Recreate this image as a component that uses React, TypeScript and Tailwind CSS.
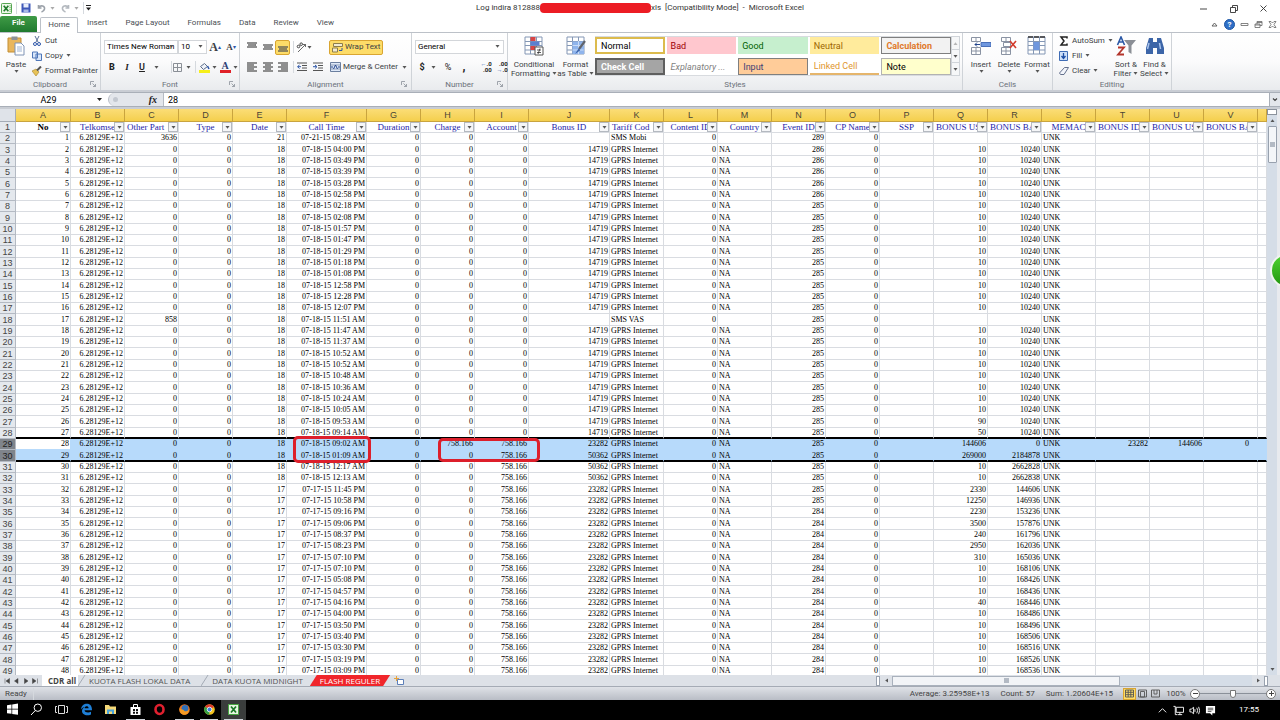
import React from "react";
import clsx from "clsx";

type Column = { id: string; width?: string; label?: string; left?: boolean; long?: boolean };

const COLUMNS: Column[] = [
  { id: "A", width: "w-[55px]", label: "No" },
  { id: "B", width: "w-[54px]", label: "Telkomse" },
  { id: "C", width: "w-[54px]", label: "Other Part", long: true },
  { id: "D", width: "w-[54px]", label: "Type" },
  { id: "E", width: "w-[54px]", label: "Date" },
  { id: "F", width: "w-[80px]", label: "Call Time" },
  { id: "G", width: "w-[54px]", label: "Duration" },
  { id: "H", width: "w-[54px]", label: "Charge" },
  { id: "I", width: "w-[54px]", label: "Account" },
  { id: "J", width: "w-[81px]", label: "Bonus ID" },
  { id: "K", width: "w-[54px]", label: "Tariff Cod", left: true, long: true },
  { id: "L", width: "w-[54px]", label: "Content ID" },
  { id: "M", width: "w-[54px]", label: "Country", left: true },
  { id: "N", width: "w-[54px]", label: "Event ID" },
  { id: "O", width: "w-[54px]", label: "CP Name" },
  { id: "P", width: "w-[54px]", label: "SSP" },
  { id: "Q", width: "w-[54px]", label: "BONUS US", long: true },
  { id: "R", width: "w-[54px]", label: "BONUS BA", long: true },
  { id: "S", width: "w-[54px]", label: "MEMAC", left: true },
  { id: "T", width: "w-[54px]", label: "BONUS ID", long: true },
  { id: "U", width: "w-[54px]", label: "BONUS US", long: true },
  { id: "V", width: "w-[54px]", label: "BONUS BA", long: true },
  { id: "" },
];

const CALL_TIMES = [
  "07-21-15 08:29 AM", "07-18-15 04:00 PM", "07-18-15 03:49 PM", "07-18-15 03:39 PM",
  "07-18-15 03:28 PM", "07-18-15 02:58 PM", "07-18-15 02:18 PM", "07-18-15 02:08 PM",
  "07-18-15 01:57 PM", "07-18-15 01:47 PM", "07-18-15 01:29 PM", "07-18-15 01:18 PM",
  "07-18-15 01:08 PM", "07-18-15 12:58 PM", "07-18-15 12:28 PM", "07-18-15 12:07 PM",
  "07-18-15 11:51 AM", "07-18-15 11:47 AM", "07-18-15 11:37 AM", "07-18-15 10:52 AM",
  "07-18-15 10:52 AM", "07-18-15 10:48 AM", "07-18-15 10:36 AM", "07-18-15 10:24 AM",
  "07-18-15 10:05 AM", "07-18-15 09:53 AM", "07-18-15 09:14 AM", "07-18-15 09:02 AM",
  "07-18-15 01:09 AM", "07-18-15 12:17 AM", "07-18-15 12:13 AM", "07-17-15 11:45 PM",
  "07-17-15 10:58 PM", "07-17-15 09:16 PM", "07-17-15 09:06 PM", "07-17-15 08:37 PM",
  "07-17-15 08:23 PM", "07-17-15 07:10 PM", "07-17-15 07:10 PM", "07-17-15 05:08 PM",
  "07-17-15 04:57 PM", "07-17-15 04:16 PM", "07-17-15 04:00 PM", "07-17-15 03:50 PM",
  "07-17-15 03:40 PM", "07-17-15 03:30 PM", "07-17-15 03:19 PM", "07-17-15 03:09 PM",
];

// bonus used / bonus balance from record 26 on, earlier ones are 10 / 10240
const BONUS: [number, number][] = [
  [90, 10240], [50, 10240], [144606, 0], [269000, 2184878], [10, 2662828], [10, 2662838],
  [2330, 144606], [12250, 146936], [2230, 153236], [3500, 157876], [240, 161796],
  [2950, 162036], [310, 165036], [10, 168106], [10, 168426], [10, 168436], [40, 168446],
  [10, 168486], [10, 168496], [10, 168506], [10, 168516], [10, 168526], [10, 168536],
];

const buildRow = (no: number): Record<string, string | number> => {
  const sms = no === 1 || no === 17;
  const bonus = no >= 26 ? BONUS[no - 26] : [10, 10240];
  const row: Record<string, string | number> = {
    A: no,
    B: "6.28129E+12",
    C: no === 1 ? 3636 : no === 17 ? 858 : 0,
    D: 0,
    E: no === 1 ? 21 : no <= 31 ? 18 : 17,
    F: CALL_TIMES[no - 1],
    G: 0,
    H: no === 28 ? "758.166" : 0,
    I: no >= 28 ? "758.166" : 0,
    K: no === 1 ? "SMS Mobi" : no === 17 ? "SMS VAS" : "GPRS Internet",
    L: 0,
    N: no === 1 ? 289 : no <= 6 ? 286 : no <= 33 ? 285 : 284,
    O: 0,
    S: "UNK",
  };
  if (!sms) {
    row.J = no < 28 ? 14719 : no >= 29 && no <= 31 ? 50362 : 23282;
    row.M = "NA";
    row.Q = bonus[0];
    row.R = bonus[1];
  }
  if (no === 28) {
    row.T = 23282;
    row.U = 144606;
    row.V = 0;
  }
  return row;
};

const ROWS = CALL_TIMES.map((_, i) => buildRow(i + 1));

const Caret = ({ className = "" }: { className?: string }) => (
  <svg viewBox="0 0 5 3" className={clsx("w-[5px] h-[3px] shrink-0", className)} fill="#555">
    <path d="M0.5 0h4L2.5 2.8z" />
  </svg>
);

const Sep = () => <span className="w-px h-3 bg-[#d5d9de] shrink-0" />;

const ExcelIcon = ({ className }: { className?: string }) => (
  <svg viewBox="0 0 12 12" className={className}>
    <rect x="0.5" y="0.5" width="11" height="11" rx="1" fill="#eef8ea" stroke="#3f9a3c" />
    <path d="M3 3l5 6M8 3l-5 6" stroke="#1e7b2a" strokeWidth="1.8" />
    <path d="M9 3h2M9 5h2M9 7h2M9 9h2" stroke="#6cb862" strokeWidth="0.8" />
  </svg>
);

const IconButton = ({
  label,
  className = "w-4",
  children,
}: {
  label: string;
  className?: string;
  children: React.ReactNode;
}) => (
  <button
    aria-label={label}
    className={clsx("h-[13px] flex items-center justify-center shrink-0", className)}
  >
    {children}
  </button>
);

const Lines = ({ rows }: { rows: [number, number, number][] }) => (
  <svg viewBox="0 0 10 10" className="w-[10px] h-[10px]" stroke="#555" strokeWidth="1.3">
    {rows.map(([x1, x2, y]) => (
      <path key={y} d={`M${x1} ${y}H${x2}`} />
    ))}
  </svg>
);

const Group = ({
  title,
  width,
  launcher,
  children,
}: {
  title: string;
  width: string;
  launcher?: boolean;
  children: React.ReactNode;
}) => (
  <section className={clsx("flex flex-col shrink-0 border-r border-[#cfd3d8]", width)}>
    <div className="h-[46px] flex">{children}</div>
    <div className="h-[11px] flex items-center justify-center relative text-[#6b717a]">
      {title}
      {launcher && (
        <button aria-label={`${title} settings`} className="absolute right-1 top-0.5">
          <svg viewBox="0 0 6 6" className="size-1.5" stroke="#8a9099" fill="none">
            <path d="M0.5 4V0.5H4M2.5 2.5l3 3M5.5 3v2.5H3" strokeWidth="0.8" />
          </svg>
        </button>
      )}
    </div>
  </section>
);

const BigButton = ({
  lines,
  width,
  icon,
  inlineCaret,
}: {
  lines: string[];
  width: string;
  icon: React.ReactNode;
  inlineCaret?: boolean;
}) => (
  <button className={clsx("flex flex-col items-center pt-[3px] leading-[9px] shrink-0", width)}>
    <span className="h-5 flex items-center">{icon}</span>
    <span className="mt-1 whitespace-nowrap">{lines[0]}</span>
    <span className="flex items-center gap-0.5 h-[9px] whitespace-nowrap">
      {lines[1]}
      <Caret className={inlineCaret ? "" : "mb-1"} />
    </span>
  </button>
);

const SmallButton = ({
  label,
  caret,
  icon,
}: {
  label: string;
  caret?: boolean;
  icon: React.ReactNode;
}) => (
  <button className="h-[15px] flex items-center gap-[3px] whitespace-nowrap">
    <svg viewBox="0 0 10 10" className="size-[10px] shrink-0">
      {icon}
    </svg>
    {label}
    {caret && <Caret />}
  </button>
);

const Picker = ({ label, value, width }: { label: string; value: string; width: string }) => (
  <div className={clsx("relative h-[14px] shrink-0", width)}>
    <select
      aria-label={label}
      className="appearance-none w-full h-full border border-[#d3d6da] bg-white pl-0.5 text-[8px] leading-[10px] text-black"
    >
      <option>{value}</option>
    </select>
    <Caret className="absolute right-1 top-[5px] pointer-events-none" />
  </div>
);

const TitleBar = () => (
  <header className="h-4 grid grid-cols-[1fr_auto_1fr] items-center">
    <div className="flex items-center pl-px gap-1">
      <ExcelIcon className="size-[11px]" />
      <Sep />
      <button aria-label="Save">
        <svg viewBox="0 0 10 10" className="size-[10px]">
          <path d="M0.5 0.5h9v9h-9z" fill="#3d57b8" />
          <path d="M2.5 0.5h5v4h-5z" fill="#e8eefb" />
          <path d="M2.5 6.5h5v3h-5z" fill="#a9b9e6" />
        </svg>
      </button>
      <button aria-label="Undo" className="flex items-center gap-1 ml-0.5">
        <svg viewBox="0 0 9 9" className="size-[9px]" fill="none" stroke="#9ba1a9" strokeWidth="1.6">
          <path d="M1.5 1v3h3M1.5 3.5C4 0.5 8 2 7.5 5C7.2 6.5 6 7.5 4.5 8" />
        </svg>
        <Caret className="opacity-50" />
      </button>
      <button aria-label="Redo" className="flex items-center gap-1 ml-0.5">
        <svg viewBox="0 0 9 9" className="size-[9px]" fill="none" stroke="#b3b8be" strokeWidth="1.6">
          <path d="M7.5 1v3h-3M7.5 3.5C5 0.5 1 2 1.5 5C1.8 6.5 3 7.5 4.5 8" />
        </svg>
        <Caret className="opacity-50" />
      </button>
      <Sep />
      <button aria-label="Customize Quick Access Toolbar" className="-ml-0.5">
        <svg viewBox="0 0 5 6" className="w-[5px] h-1.5" fill="#222">
          <path d="M0 0h5v1H0zM0 2.5h5L2.5 5.5z" />
        </svg>
      </button>
    </div>
    <h1 className="flex items-center whitespace-pre text-[#333]">
      Log indira 812888
      <span className="w-[111px] h-[10px] rounded-[4px] bg-[#ec1c24]" />
      {"xls  [Compatibility Mode]  -  Microsoft Excel"}
    </h1>
    <div className="flex justify-end pr-0.5">
      {[
        ["Minimize", "M1 5h7"],
        ["Restore", "M1.5 3.5h5v5h-5zM3.5 3.5v-2h5v5h-2"],
        ["Close", "M1.5 1.5l6 6M7.5 1.5l-6 6"],
      ].map(([name, d]) => (
        <button key={name} aria-label={name} className="w-[30px] h-4 flex items-center justify-center">
          <svg viewBox="0 0 9 9" className="size-[9px]" fill="none" stroke="#333" strokeWidth="0.9">
            <path d={d} />
          </svg>
        </button>
      ))}
    </div>
  </header>
);

const RibbonTabs = () => (
  <nav className="h-[17px] flex items-end border-b border-[#bcc1c8] text-[#4b4f55]">
    <button className="w-[37px] h-4 pb-0.5 rounded-t-[2px] bg-linear-to-b from-[#3f9b46] to-[#1f7a2e] text-white font-semibold">
      File
    </button>
    <button className="ml-[3px] w-[38px] h-4 pb-0.5 -mb-px bg-white border border-b-0 border-[#bcc1c8] rounded-t-[2px]">
      Home
    </button>
    {["Insert", "Page Layout", "Formulas", "Data", "Review", "View"].map((tab) => (
      <button key={tab} className="px-[9px] h-4 pb-0.5">
        {tab}
      </button>
    ))}
    <div className="ml-auto flex h-4 items-center gap-[5px] pr-[3px]">
      <button aria-label="Minimize the ribbon">
        <svg viewBox="0 0 9 9" className="size-[9px]" fill="none" stroke="#555">
          <path d="M2 6l2.5-3L7 6z" strokeWidth="0.9" />
        </svg>
      </button>
      <button
        aria-label="Help"
        className="size-[11px] rounded-full bg-[#2f6fc6] border border-[#1d56a5] text-white text-[8px] leading-[9px] font-bold"
      >
        ?
      </button>
      {[
        ["Minimize workbook", "M1 3.5h7v2h-7z"],
        ["Restore workbook", "M1 4h5v3.500h-5zM3 4v-2.500h5v4h-2M1 5h5M3 2.500h5"],
        ["Close workbook", "M1 1.500h2l1.500 1.500l1.500-1.500h2L6 4.500l2 3H6L4.500 6L3 7.500H1L3 4.500z"],
      ].map(([name, d]) => (
        <button key={name} aria-label={name}>
          <svg viewBox="0 0 9 9" className="size-[9px]" fill="none" stroke="#666" strokeWidth="0.8">
            <path d={d} />
          </svg>
        </button>
      ))}
    </div>
  </nav>
);

const CellStyle = ({ name, className }: { name: string; className: string }) => (
  <button className={clsx("h-[17px] px-1 flex items-center text-[9px] whitespace-nowrap overflow-hidden", className)}>
    {name}
  </button>
);

const SheetGrid = ({ mark }: { mark?: React.ReactNode }) => (
  <svg viewBox="0 0 20 20" className="size-5">
    <path d="M1 1h17v17h-17z" fill="#fff" />
    <path d="M1 1h17v17h-17zM1 5.500h17M1 9.500h17M1 14h17M6.500 1v17M12.500 1v17" fill="none" stroke="#8497b5" />
    {mark}
  </svg>
);

const Ribbon = () => (
  <div className="h-[57px] flex bg-linear-to-b from-white via-[#fbfbfc] to-[#e9ebee] text-[#3b3f45]">
    <Group title="Clipboard" width="w-[101px]" launcher>
      <BigButton
        width="w-8"
        lines={["Paste", ""]}
        icon={
          <svg viewBox="0 0 20 20" className="size-5">
            <path d="M2 2h13v14h-13z" fill="#e9b65c" stroke="#c28d33" />
            <path d="M5.500 0.500h6v3.500h-6z" fill="#8d9199" />
            <path d="M9 7h6l3 3v9h-9z" fill="#fff" stroke="#7e93b5" />
            <path d="M11 11h5M11 13h5M11 15h5" stroke="#9fb4d3" />
          </svg>
        }
      />
      <div className="flex flex-col">
        <SmallButton
          label="Cut"
          icon={
            <>
              <path d="M3 0l3 6M7 0L4 6" stroke="#5a6f94" />
              <circle cx="3" cy="8" r="1.500" fill="none" stroke="#2c55a8" />
              <circle cx="7" cy="8" r="1.500" fill="none" stroke="#2c55a8" />
            </>
          }
        />
        <SmallButton
          label="Copy"
          caret
          icon={<path d="M0.500 1h5v6h-5zM4 3h5.500v6.500h-5.500z" fill="#d9e6fa" stroke="#4f77b8" />}
        />
        <SmallButton
          label="Format Painter"
          icon={
            <>
              <path d="M0 5l4-2 3 3-3 4z" fill="#e7c257" stroke="#a8842a" strokeWidth="0.6" />
              <path d="M5 4.500L9 0.500" stroke="#555" strokeWidth="2" />
            </>
          }
        />
      </div>
    </Group>

    <Group title="Font" width="w-[139px]" launcher>
      <div className="flex flex-col pt-[7px] gap-[6px] pl-[3px]">
        <div className="flex items-center h-[14px]">
          <Picker label="Font" value="Times New Roman" width="w-[74px]" />
          <Picker label="Font size" value="10" width="w-[29px]" />
          <IconButton label="Increase font size">
            <span className="font-['Liberation_Serif',serif] font-bold text-[12px] leading-3">A</span>
            <span className="text-[6px] text-[#2c55a8]">▴</span>
          </IconButton>
          <IconButton label="Decrease font size">
            <span className="font-['Liberation_Serif',serif] font-bold text-[9px] leading-3">A</span>
            <span className="text-[6px] text-[#2c55a8]">▾</span>
          </IconButton>
        </div>
        <div className="flex items-center h-[14px] text-[#222] text-[9px]">
          <IconButton label="Bold"><b className="font-extrabold">B</b></IconButton>
          <IconButton label="Italic" className="w-[14px]"><i className="font-['Liberation_Serif',serif] font-bold">I</i></IconButton>
          <IconButton label="Underline"><u className="font-semibold">U</u></IconButton>
          <Caret className="mx-1" />
          <span className="w-2" />
          <Sep />
          <IconButton label="Borders" className="w-[10px]">
            <svg viewBox="0 0 9 9" className="size-[9px]" fill="none" stroke="#8a8f96">
              <path d="M0.500 0.500h8v8h-8zM4.500 0.500v8M0.500 4.500h8" />
            </svg>
          </IconButton>
          <Caret className="mx-1" />
          <Sep />
          <IconButton label="Fill color">
            <svg viewBox="0 0 11 11" className="size-[11px]">
              <path d="M1.500 4.500l4-3 3 3-4 3z" fill="#eef2f8" stroke="#5b6c89" />
              <path d="M8.500 4l1.500 3" stroke="#2c55a8" strokeWidth="1.500" />
              <path d="M0 8h11v3h-11z" fill="#f6ef1a" />
            </svg>
          </IconButton>
          <Caret />
          <IconButton label="Font color">
            <span className="flex flex-col items-center font-bold font-['Liberation_Serif',serif] text-[10px] leading-2 text-[#2d3f75] border-b-[3px] border-[#e02128] w-[11px]">
              A
            </span>
          </IconButton>
          <Caret />
        </div>
      </div>
    </Group>

    <Group title="Alignment" width="w-[172px]" launcher>
      <div className="flex flex-col pt-[7px] gap-[6px] pl-1">
        <div className="flex items-center h-[14px]">
          <IconButton label="Top align"><Lines rows={[[0, 10, 1], [1, 9, 3], [0, 10, 5]]} /></IconButton>
          <IconButton label="Middle align" className="w-[15px]"><Lines rows={[[0, 10, 3], [1, 9, 5], [0, 10, 7]]} /></IconButton>
          <button
            aria-label="Bottom align"
            className="w-[15px] h-[15px] flex items-center justify-center border border-[#d9a531] rounded-[2px] bg-[#fddc68]"
          >
            <Lines rows={[[0, 10, 5], [1, 9, 7], [0, 10, 9]]} />
          </button>
          <span className="w-[3px]" />
          <Sep />
          <IconButton label="Orientation" className="w-5">
            <svg viewBox="0 0 11 11" className="size-[11px]" fill="none" stroke="#444">
              <path d="M2 10L9.500 2.500M9.500 2.500H7M9.500 2.500V5" strokeWidth="0.8" />
              <circle cx="2.500" cy="4.500" r="1.300" />
              <circle cx="5.200" cy="2.200" r="1.300" />
            </svg>
            <Caret />
          </IconButton>
          <span className="ml-3 mr-[3px]"><Sep /></span>
          <button className="h-[15px] px-0.5 flex items-center gap-0.5 border border-[#d9a531] rounded-[2px] bg-[#fddc68] whitespace-nowrap">
            <svg viewBox="0 0 11 11" className="size-[11px]">
              <path d="M1.500 1.500h9v3h-9zM0.500 6h5v4h-5z" fill="#f1ead0" stroke="#8d7d4a" />
              <path d="M10 6v2.500H7" fill="none" stroke="#2c55a8" />
            </svg>
            Wrap Text
          </button>
        </div>
        <div className="flex items-center h-[14px]">
          <IconButton label="Align left"><Lines rows={[[0, 10, 1], [0, 7, 3], [0, 10, 5], [0, 7, 7], [0, 10, 9]]} /></IconButton>
          <IconButton label="Center" className="w-[15px]"><Lines rows={[[0, 10, 1], [2, 8, 3], [0, 10, 5], [2, 8, 7], [0, 10, 9]]} /></IconButton>
          <IconButton label="Align right" className="w-[15px]"><Lines rows={[[0, 10, 1], [3, 10, 3], [0, 10, 5], [3, 10, 7], [0, 10, 9]]} /></IconButton>
          <span className="w-[3px]" />
          <Sep />
          {["Decrease indent", "Increase indent"].map((name, i) => (
            <IconButton key={name} label={name}>
              <svg viewBox="0 0 10 10" className="size-[10px]" fill="none" stroke="#555">
                <path d="M0 1h10M5 3.500h5M5 6h5M0 8.500h10" />
                <path d={i ? "M0 4.700h3M2 3l2 1.700L2 6.500" : "M4 4.700H1M2.500 3l-2 1.700l2 1.800"} stroke="#2c55a8" />
              </svg>
            </IconButton>
          ))}
          <span className="mr-1"><Sep /></span>
          <button className="flex items-center gap-0.5 whitespace-nowrap">
            <svg viewBox="0 0 11 10" className="w-[11px] h-[10px]">
              <path d="M0.500 0.500h10v9h-10z" fill="#dfe9f8" stroke="#6b7f9f" />
              <path d="M0 3h11M0 7h11" stroke="#6b7f9f" strokeWidth="0.700" />
              <path d="M3.500 7l2-4 2 4M1 5h2M8 5h2" fill="none" stroke="#22448c" />
            </svg>
            Merge &amp; Center
            <Caret className="ml-0.5" />
          </button>
        </div>
      </div>
    </Group>

    <Group title="Number" width="w-[96px]" launcher>
      <div className="flex flex-col pt-[7px] gap-[6px] pl-[3px]">
        <Picker label="Number format" value="General" width="w-[89px]" />
        <div className="flex items-center h-[14px] text-[#222] text-[9px]">
          <IconButton label="Accounting format" className="w-[14px]"><b>$</b></IconButton>
          <Caret className="mx-0.5" />
          <IconButton label="Percent style" className="w-5">%</IconButton>
          <IconButton label="Comma style" className="w-3"><b className="text-[12px] leading-[6px]">,</b></IconButton>
          <span className="mx-1"><Sep /></span>
          <IconButton label="Increase decimal">
            <span className="text-[6px] leading-[6px] font-bold text-right"><span className="text-[#2c55a8]">←</span>.0<br />.00</span>
          </IconButton>
          <IconButton label="Decrease decimal">
            <span className="text-[6px] leading-[6px] font-bold text-right">.00<br /><span className="text-[#2c55a8]">→</span>.0</span>
          </IconButton>
        </div>
      </div>
    </Group>

    <Group title="Styles" width="w-[455px]">
      <BigButton
        width="w-[52px]"
        lines={["Conditional", "Formatting"]}
        inlineCaret
        icon={
          <SheetGrid
            mark={
              <>
                <path d="M6.500 1h5v4h-5zM6.500 10h5v4h-5z" fill="#d84545" />
                <path d="M6.500 5.500h9v4h-9z" fill="#5b7fd0" />
                <path d="M11 11h8v8h-8z" fill="#fff" stroke="#555" />
                <path d="M13 14h4M13 16.500h4M16 12.500l-2 5.500" stroke="#333" strokeWidth="0.800" />
              </>
            }
          />
        }
      />
      <BigButton
        width="w-[31px]"
        lines={["Format", "as Table"]}
        inlineCaret
        icon={
          <SheetGrid
            mark={
              <>
                <path d="M6.500 5.500h11.500v12.500h-11.500z" fill="#8fb4ec" />
                <path d="M6.500 9.500h11M6.500 14h11M12.500 5v13" stroke="#c9dcf7" />
                <path d="M19 5l-6 8" stroke="#60646b" strokeWidth="2.200" />
                <path d="M13 12l-4 6 5-3.500z" fill="#3a62a8" />
              </>
            }
          />
        }
      />
      <div className="ml-1 mt-[3px] h-[40px] flex">
        <div className="w-[356px] h-[40px] grid grid-cols-5 gap-x-0.5 content-between border-y border-[#d8dbdf] bg-white text-black">
          <CellStyle name="Normal" className="border-2 border-[#dcbb4d]" />
          <CellStyle name="Bad" className="bg-[#ffc7ce] text-[#9c0006]" />
          <CellStyle name="Good" className="bg-[#c6efce] text-[#006100]" />
          <CellStyle name="Neutral" className="bg-[#ffeb9c] text-[#9c6500]" />
          <CellStyle name="Calculation" className="bg-[#f2f2f2] text-[#e0792a] font-bold border border-[#7f7f7f]" />
          <CellStyle name="Check Cell" className="bg-[#a5a5a5] text-white font-bold border-2 border-[#5f5f5f]" />
          <CellStyle name="Explanatory ..." className="text-[#7f7f7f] italic" />
          <CellStyle name="Input" className="bg-[#ffcc99] text-[#3f3f76] border border-[#7f7f7f]" />
          <CellStyle name="Linked Cell" className="text-[#e0962f] border-b-2 border-[#e5b56c]" />
          <CellStyle name="Note" className="bg-[#ffffcc] border border-[#b2b2b2]" />
        </div>
        <div className="w-[9px] flex flex-col border border-[#d0d4d9] bg-[#f6f7f8]">
          {["Previous styles", "Next styles", "More styles"].map((name, i) => (
            <button key={name} aria-label={name} className="flex-1 flex items-center justify-center border-b border-[#d0d4d9] last:border-b-0">
              <Caret className={i === 0 ? "rotate-180 opacity-40" : ""} />
            </button>
          ))}
        </div>
      </div>
    </Group>

    <Group title="Cells" width="w-[90px]">
      <div className="flex pl-1">
        <BigButton
          width="w-7"
          lines={["Insert", ""]}
          icon={
            <svg viewBox="0 0 20 20" className="size-5" fill="#fff" stroke="#8a93a3">
              <path d="M0.500 1.500h9v4h-9zM5 1.500v4M0.500 11.500h9v7h-9zM5 11.500v7M0.500 15h9" />
              <path d="M10 6.500h10v4h-10z" fill="#6f97de" stroke="#4a6fb8" />
              <path d="M9 8.500H4M6 6.500l-2 2 2 2" fill="none" stroke="#22448c" />
            </svg>
          }
        />
        <BigButton
          width="w-7"
          lines={["Delete", ""]}
          icon={
            <svg viewBox="0 0 20 20" className="size-5" fill="#fff" stroke="#8a93a3">
              <path d="M2.500 1.500h9v4h-9zM7 1.500v4M4.500 6.500h7v4h-7zM2.500 11.500h9v7h-9zM7 11.500v7M2.500 15h9" />
              <path d="M11 5l6 7M17 5l-6 7" stroke="#d23b2c" strokeWidth="1.600" />
            </svg>
          }
        />
        <BigButton
          width="w-7"
          lines={["Format", ""]}
          icon={
            <SheetGrid
              mark={
                <>
                  <path d="M6.500 6h6v8h-6z" fill="#6f97de" />
                  <path d="M1 1h17" stroke="#333" strokeWidth="1.500" strokeDasharray="5 1" />
                </>
              }
            />
          }
        />
      </div>
    </Group>

    <Group title="Editing" width="w-[119px]">
      <div className="flex flex-col pl-1.5 w-[58px]">
        <SmallButton label="AutoSum" caret icon={<path d="M8 2.500V1H2l3 4-3 4h6V7.500" fill="none" stroke="#222" strokeWidth="1.500" />} />
        <SmallButton
          label="Fill"
          caret
          icon={
            <>
              <path d="M0.500 0.500h8v9h-8z" fill="#cfe0f8" stroke="#3f6cb5" />
              <path d="M4.500 2v5M2.500 5l2 2.500 2-2.500" fill="none" stroke="#1e4fa5" strokeWidth="1.300" />
            </>
          }
        />
        <SmallButton label="Clear" caret icon={<path d="M0.500 7l5-5.500h4L5 8.500H1.500z" fill="#f3f5fb" stroke="#64708c" />} />
      </div>
      <BigButton
        width="w-[30px]"
        lines={["Sort &", "Filter"]}
        inlineCaret
        icon={
          <svg viewBox="0 0 20 20" className="size-5" fill="none">
            <path d="M1.500 9L5 1l3.500 8M3 6h4.500" stroke="#2b58a6" strokeWidth="1.600" />
            <path d="M2 11.500h6L2 18.500h6" stroke="#b3352c" strokeWidth="1.800" />
            <path d="M8 4h12l-4.500 5.500v8.500l-3-2v-6.500z" fill="#8b8f96" />
          </svg>
        }
      />
      <BigButton
        width="w-[27px]"
        lines={["Find &", "Select"]}
        inlineCaret
        icon={
          <svg viewBox="0 0 20 20" className="size-5" fill="#3c65a8">
            <path d="M4 2h4v4h4V2h4l3 10v6h-7v-6h-4v6H1v-6z" />
            <path d="M4 7l-1.500 6M14.500 7l1 6" stroke="#a9c3ec" strokeWidth="1.500" />
          </svg>
        }
      />
    </Group>
  </div>
);

const FormulaBar = () => (
  <div className="py-0.5 bg-[#c9cdd4]">
    <div className="h-[15px] flex bg-white border-y border-[#a9afb8]">
      <div className="w-[108px] flex items-center pr-1.5">
        <input aria-label="Name box" defaultValue="A29" className="w-full min-w-0 text-center text-[9px] text-black" />
        <svg viewBox="0 0 5 3" className="w-[5px] h-[3px] shrink-0" fill="#222">
          <path d="M0 0h5L2.500 3z" />
        </svg>
      </div>
      <div className="w-14 flex items-center justify-between rounded-l-full bg-[#e3e6eb] border border-y-0 border-[#b6bbc4] pl-1 pr-1.5">
        <span className="size-[5px] rounded-full bg-[#c3c8d0]" />
        <button aria-label="Insert function" className="font-['Liberation_Serif',serif] italic font-bold text-[10px] leading-3 text-[#222]">
          fx
        </button>
      </div>
      <input aria-label="Formula" defaultValue="28" className="flex-1 min-w-0 pl-1 text-[9px] text-black" />
      <button aria-label="Expand formula bar" className="w-[11px] flex items-center justify-center border-l border-[#a9afb8] bg-[#e3e6eb]">
        <svg viewBox="0 0 6 4" className="w-1.5 h-1" fill="none" stroke="#444" strokeWidth="1.200">
          <path d="M1 0.500l2 2 2-2" />
        </svg>
      </button>
    </div>
  </div>
);

const FilterHeader = ({ column, first }: { column: Column; first: boolean }) => (
  <div className="relative">
    <div
      className={clsx(
        "overflow-hidden whitespace-nowrap text-[9px] leading-[10px]",
        first ? "font-bold text-black" : "text-[#2424a8]",
        column.long ? "pl-0.5 text-left" : "text-center",
      )}
    >
      {column.label}
    </div>
    <button
      aria-label={`Filter ${column.label}`}
      className="absolute right-0 top-0 w-[10px] h-[10px] flex items-center justify-center border border-[#b4b9c0] bg-[#f5f6f8]"
    >
      <Caret />
    </button>
  </div>
);

const RowNumber = ({ n, selected }: { n: number; selected?: boolean }) => (
  <th
    className={clsx(
      "p-0 font-normal text-center text-[9px] leading-[10px] font-['Liberation_Sans',sans-serif] border-r border-b border-[#b4bac3]",
      selected ? "bg-[#7f848b] text-[#222]" : "bg-[#e4e8ed] text-[#444]",
    )}
  >
    {n}
  </th>
);

const Worksheet = () => (
  <table className="w-full table-fixed border-separate border-spacing-0 bg-white text-[8px] leading-[10px] text-black font-['Liberation_Serif',serif]">
    <colgroup>
      <col className="w-4" />
      {COLUMNS.map((c) => (
        <col key={c.id} className={c.width} />
      ))}
    </colgroup>
    <thead className="font-['Liberation_Sans',sans-serif] text-[9px] leading-[12px]">
      <tr className="h-[13px]">
        <th className="p-0 bg-[#dfe3e9] border-r border-b border-[#a5acb6]" aria-label="Select all" />
        {COLUMNS.map((c) => (
          <th
            key={c.id}
            className="p-0 font-normal text-[#4a4535] bg-linear-to-b from-[#fbdd76] to-[#f4cf4c] border-r border-b border-[#c9a43e]"
          >
            {c.id}
          </th>
        ))}
      </tr>
    </thead>
    <tbody>
      <tr className="h-[11px]">
        <RowNumber n={1} />
        {COLUMNS.map((c, i) => (
          <td key={c.id} className="p-0 border-r border-b border-[#d9dce1]">
            {c.label && <FilterHeader column={c} first={i === 0} />}
          </td>
        ))}
      </tr>
      {ROWS.map((row, i) => {
        const n = i + 2;
        const selected = n === 29 || n === 30;
        const thick = n === 28 || n === 30;
        return (
          <tr key={n} className={n % 3 === 0 ? "h-3" : "h-[11px]"}>
            <RowNumber n={n} selected={selected} />
            {COLUMNS.map((c) => (
              <td
                key={c.id}
                className={clsx(
                  "py-0 overflow-hidden whitespace-nowrap border-r",
                  c.left ? "text-left" : "text-right",
                  c.id === "V" ? "pr-2" : "px-px",
                  thick ? "border-b-2 border-b-black leading-[9px]" : "border-b",
                  !thick && (n === 29 ? "border-b-[#b7dafb]" : "border-b-[#d9dce1]"),
                  selected ? "border-r-[#b7dafb]" : "border-r-[#d9dce1]",
                  selected && !(n === 29 && c.id === "A") && "bg-[#b7dafb]",
                )}
              >
                {row[c.id]}
              </td>
            ))}
          </tr>
        );
      })}
    </tbody>
  </table>
);

const VerticalScroll = () => (
  <div className="w-[13px] shrink-0 flex flex-col items-center bg-[#d5dde7] border-r-[3px] border-[#e8eaee]">
    <div className="w-full h-1.5 border border-[#8b929c] bg-white" />
    <button aria-label="Scroll up" className="h-[11px] flex items-center">
      <Caret className="rotate-180" />
    </button>
    <div className="w-[9px] h-[37px] rounded-[1px] border border-[#98a1ae] bg-[#f4f6f9] flex items-center justify-center">
      <span className="size-[5px] bg-[#b3bac4]" />
    </div>
    <button aria-label="Scroll down" className="mt-auto h-[11px] flex items-center">
      <Caret />
    </button>
  </div>
);

const Slash = () => (
  <svg viewBox="0 0 8 11" className="w-2 h-[11px] shrink-0" stroke="#a4abb5" fill="none">
    <path d="M0 11L7 0" />
  </svg>
);

const SheetTabs = () => (
  <div className="h-[11px] shrink-0 flex items-stretch bg-[#dde1e7] leading-[11px] text-[#555]">
    <div className="w-[42px] flex items-center justify-evenly">
      {[
        ["First sheet", "M1 0.500v5M5.500 0.500L2 3l3.500 2.500z"],
        ["Previous sheet", "M5 0.500L1.500 3L5 5.500z"],
        ["Next sheet", "M1.500 0.500L5 3L1.500 5.500z"],
        ["Last sheet", "M0.500 0.500L4 3L0.500 5.500zM5.500 0.500v5"],
      ].map(([name, d]) => (
        <button key={name} aria-label={name}>
          <svg viewBox="0 0 6 6" className="size-1.5" fill="#444" stroke="#444" strokeWidth="0.500">
            <path d={d} />
          </svg>
        </button>
      ))}
    </div>
    <div className="flex font-['Open_Sans','Noto_Sans',sans-serif]">
      <button className="pl-1.5 pr-0.5 bg-white font-bold text-[#444]">CDR all</button>
      <Slash />
      <button className="px-[3px]">KUOTA FLASH LOKAL DATA</button>
      <span className="w-2" />
      <Slash />
      <button className="px-[3px]">DATA KUOTA MIDNIGHT</button>
      <span className="w-1" />
      <button className="px-2.5 bg-[#f0262b] text-white [clip-path:polygon(7px_0,100%_0,calc(100%-7px)_100%,0_100%)]">
        FLASH REGULER
      </button>
    </div>
    <button aria-label="Insert worksheet" className="ml-1 flex items-center">
      <svg viewBox="0 0 10 10" className="size-[10px]">
        <path d="M3.500 3.500h6v5h-6z" fill="#fff" stroke="#5c7fb8" />
        <path d="M2.500 0v5M0 2.500h5" stroke="#e8a33a" />
      </svg>
    </button>
    <div className="ml-auto w-[404px] flex items-center">
      <span className="w-1 h-[10px] border border-[#98a1ae] bg-white" />
      <button aria-label="Scroll left" className="w-3 flex justify-center">
        <Caret className="rotate-90" />
      </button>
      <div className="w-[228px] h-[10px] border border-[#a9b1bc] bg-[#f2f4f7] flex items-center justify-center">
        <span className="size-[5px] bg-[#b3bac4]" />
      </div>
      <div className="flex-1 h-full bg-[#d5dde7]" />
      <button aria-label="Scroll right" className="w-3 flex justify-center">
        <Caret className="-rotate-90" />
      </button>
      <span className="w-1 h-[10px] border border-[#98a1ae] bg-white" />
      <span className="w-3" />
    </div>
  </div>
);

const StatusBar = () => (
  <div className="h-[14px] shrink-0 flex items-center bg-linear-to-b from-[#dfe2e7] to-[#b9bdc6] border-t border-[#a5abb5] text-[#444] whitespace-nowrap">
    <span className="pl-[5px] pr-1.5">Ready</span>
    <Sep />
    <div className="ml-auto flex items-center gap-[11px]">
      <span>Average: 3.25958E+13</span>
      <span>Count: 57</span>
      <span>Sum: 1.20604E+15</span>
    </div>
    <div className="ml-[10px] flex items-center">
      {[
        ["Normal view", "M0.500 1h8v7h-8zM0.500 3.300h8M0.500 5.700h8M3.200 1v7M5.800 1v7"],
        ["Page layout", "M0.500 1h8v7h-8zM2.500 2.500h4v5.500h-4z"],
        ["Page break preview", "M0.500 1h8v7h-8zM3 1v4h3V1"],
      ].map(([name, d], i) => (
        <button
          key={name}
          aria-label={name}
          className={clsx(
            "w-[13px] h-3 flex items-center justify-center",
            i === 0 && "border border-[#d9a531] bg-[#fddc68]",
          )}
        >
          <svg viewBox="0 0 9 9" className="size-[9px]" fill="none" stroke="#555" strokeWidth="0.900">
            <path d={d} />
          </svg>
        </button>
      ))}
    </div>
    <span className="w-7 text-center">100%</span>
    <button aria-label="Zoom out" className="size-[10px] rounded-full border border-[#777] bg-white flex items-center justify-center">
      <span className="w-[5px] h-px bg-[#444]" />
    </button>
    <input
      type="range"
      aria-label="Zoom"
      defaultValue={50}
      className="w-[66px] h-[10px] appearance-none bg-[linear-gradient(#8a9099,#8a9099)] bg-[length:100%_1px] bg-center bg-no-repeat [&::-webkit-slider-thumb]:appearance-none [&::-webkit-slider-thumb]:w-[6px] [&::-webkit-slider-thumb]:h-2 [&::-webkit-slider-thumb]:rounded-b-[3px] [&::-webkit-slider-thumb]:border [&::-webkit-slider-thumb]:border-[#777] [&::-webkit-slider-thumb]:bg-white"
    />
    <button aria-label="Zoom in" className="size-[10px] mr-1 rounded-full border border-[#777] bg-white flex items-center justify-center">
      <svg viewBox="0 0 5 5" className="size-[5px]" stroke="#444">
        <path d="M0 2.500h5M2.500 0v5" />
      </svg>
    </button>
  </div>
);

const TASKS: { name: string; open?: boolean; active?: boolean; icon: React.ReactNode }[] = [
  { name: "Start", icon: <path d="M1 2.200l4.500-0.700v4.300H1zM6.200 1.400L12 0.500v5.300H6.200zM1 6.500h4.500v4.300L1 10.200zM6.200 6.500H12v5.300l-5.800-0.900z" fill="#fff" /> },
  { name: "Search", icon: <path d="M5 7.800L1 12M7.800 1a3.700 3.700 0 1 1 0 7.400a3.700 3.700 0 1 1 0-7.400" fill="none" stroke="#fff" /> },
  { name: "Task view", icon: <path d="M3.500 2.500h6v8h-6zM2 3.500H0.500v6H2M11 3.500h1.500v6H11" fill="none" stroke="#ddd" /> },
  { name: "Edge", icon: <path d="M1 6.500C1.500 2.500 4 0.800 6.800 0.800C10.500 0.800 12 3.500 12 7.200H4.500C4.800 9.300 8 10.200 11 8.800V11.400C6.500 13.500 2 11.500 2 8C2 6 3.200 4.700 4.800 4C3.300 4.200 2 5 1 6.500zM4.700 5.200H8.600C8.500 2.700 4.900 2.700 4.700 5.200z" fill="#1e7fd6" fillRule="evenodd" /> },
  {
    name: "File Explorer",
    icon: (
      <>
        <path d="M1 2h4l1 1.500h6V11H1z" fill="#f5d978" />
        <path d="M3 6.500h7V11H3z" fill="#4aa3dc" />
        <path d="M5 8.500h3V11H5z" fill="#f5d978" />
      </>
    ),
  },
  {
    name: "Store",
    open: true,
    icon: (
      <>
        <path d="M1.500 4h10v8h-10z" fill="#fff" />
        <path d="M4.500 4V1.500h4V4" fill="none" stroke="#fff" />
        <path d="M4 6h2v2H4zM7 6h2v2H7zM4 8.700h2v2H4zM7 8.700h2v2H7z" fill="#111" />
      </>
    ),
  },
  { name: "Opera", icon: <ellipse cx="6.500" cy="6.500" rx="4" ry="4.500" fill="none" stroke="#e0202f" strokeWidth="2.600" /> },
  {
    name: "Firefox",
    open: true,
    icon: (
      <>
        <circle cx="6.500" cy="6.500" r="5.300" fill="#e8701c" />
        <circle cx="7" cy="5.500" r="3.400" fill="#2f6fb8" />
        <path d="M1.500 5C3 7 5 6 6 7.500C7 9 10 8.500 11 6C11 10 8.500 11.800 6.500 11.800C3.500 11.800 1 9 1.500 5z" fill="#f49b24" />
      </>
    ),
  },
  {
    name: "Chrome",
    open: true,
    icon: (
      <>
        <circle cx="6.500" cy="6.500" r="5.300" fill="#f3c320" />
        <path d="M1.900 3.800A5.300 5.300 0 0 1 11.100 3.900L6.500 6.500z" fill="#dd3b2c" />
        <path d="M1.900 3.800A5.300 5.300 0 0 0 6.300 11.800L6.500 6.500z" fill="#34a047" />
        <circle cx="6.500" cy="6.500" r="2.300" fill="#3f7fe0" stroke="#fff" strokeWidth="0.800" />
      </>
    ),
  },
  {
    name: "Excel",
    open: true,
    active: true,
    icon: (
      <>
        <path d="M1.500 1.500h10v10h-10z" fill="#e9f7e4" stroke="#49a844" />
        <path d="M4 3.500l5 6M9 3.500l-5 6" stroke="#1e7b2a" strokeWidth="1.800" />
      </>
    ),
  },
];

const Taskbar = () => (
  <footer className="h-5 shrink-0 flex bg-black">
    <div className="w-[246px] flex">
      {TASKS.map((task) => (
        <button
          key={task.name}
          aria-label={task.name}
          className={clsx("flex-1 flex items-center justify-center px-[3px]", task.active && "bg-[#3a3d3c]")}
        >
          <span className={clsx("w-full h-full flex items-center justify-center border-b", task.open ? "border-[#cfd4da]" : "border-transparent")}>
            <svg viewBox="0 0 13 13" className="size-[13px] shrink-0">
              {task.icon}
            </svg>
          </span>
        </button>
      ))}
    </div>
    <div className="ml-auto flex items-center gap-[5px] pr-[21px] text-white">
      {[
        ["Show hidden icons", "M2 8l4-4 4 4"],
        ["Network", "M3.500 2.500h8v5.500h-8zM7.500 8v2.500M5 10.500h5M0.500 1.500h2v9h2"],
        ["Volume", "M1 4.500h1.500L5 2.500v7L2.500 7.500H1zM6.500 4.500v3M8.500 3q1.800 3 0 6M10.500 2q2.200 4 0 8"],
      ].map(([name, d]) => (
        <button key={name} aria-label={name}>
          <svg viewBox="0 0 12 12" className="size-[11px]" fill="none" stroke="#fff" strokeWidth="1">
            <path d={d} />
          </svg>
        </button>
      ))}
      <button aria-label="Notifications">
        <svg viewBox="0 0 12 12" className="size-[11px]">
          <path d="M1 1h10v8H8v2.500L5.500 9H1z" fill="#fff" />
          <path d="M3 3.500h6M3 5.200h6M3 7h4" stroke="#222" strokeWidth="0.800" />
        </svg>
      </button>
      <time className="ml-[18px] text-[8px]">17:55</time>
    </div>
  </footer>
);

const App: React.FC = () => {
  return (
    <div className="h-screen flex flex-col overflow-hidden bg-white text-[8px] leading-[10px] font-['Roboto','Open_Sans',sans-serif]">
      <TitleBar />
      <RibbonTabs />
      <Ribbon />
      <FormulaBar />
      <main className="relative flex-1 min-h-0 flex">
        <div className="flex-1 min-w-0 overflow-hidden">
          <Worksheet />
        </div>
        <VerticalScroll />
        {/* red pen marks over the call times and the charges */}
        <div className="absolute left-[293px] top-[327px] w-[78px] h-[27px] rounded-[5px] border-[3px] border-[#dd1f2b]" />
        <div className="absolute left-[438px] top-[329px] w-[102px] h-[24px] rounded-[5px] border-[3px] border-[#dd1f2b]" />
        <div className="absolute right-0 top-[144px] w-[10px] h-[35px] overflow-hidden">
          <div className="size-[35px] rounded-full bg-linear-to-b from-[#4fd432] to-[#22960f] border-2 border-[#f1f4f1]" />
        </div>
      </main>
      <SheetTabs />
      <StatusBar />
      <Taskbar />
    </div>
  );
};

export default App;
